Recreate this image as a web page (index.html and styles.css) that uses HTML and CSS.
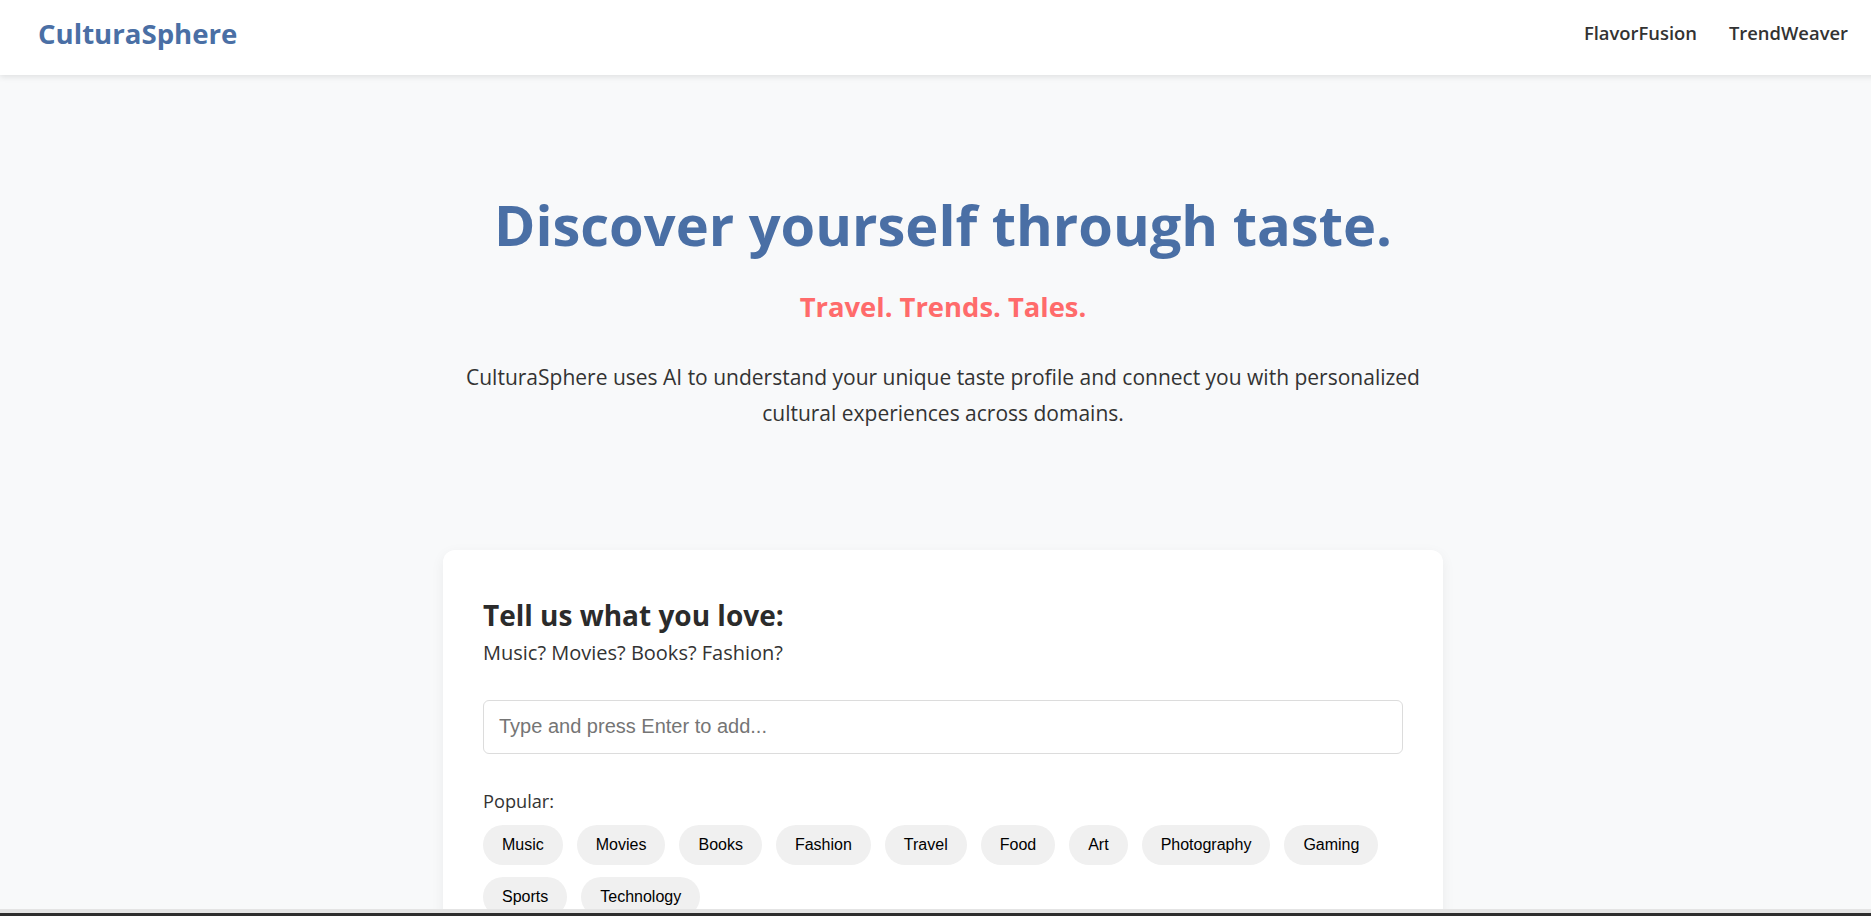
FILE: index.html
```html
<!DOCTYPE html>
<html lang="en">
<head>
<meta charset="utf-8">
<title>CulturaSphere</title>
<link rel="stylesheet" href="styles.css">
</head>
<body>
<div class="page">
  <header class="topbar">
    <div class="logo">CulturaSphere</div>
    <nav class="nav">
      <a class="nav-link" href="#">FlavorFusion</a>
      <a class="nav-link" href="#">TrendWeaver</a>
    </nav>
  </header>

  <section class="hero">
    <h1 class="hero-title">Discover yourself through taste.</h1>
    <h2 class="hero-sub">Travel. Trends. Tales.</h2>
    <p class="hero-text">CulturaSphere uses AI to understand your unique taste profile and connect you with personalized cultural experiences across domains.</p>
  </section>

  <section class="card">
    <h2 class="card-title">Tell us what you love:</h2>
    <p class="card-sub">Music? Movies? Books? Fashion?</p>
    <input class="taste-input" type="text" placeholder="Type and press Enter to add...">
    <p class="popular-label">Popular:</p>
    <div class="chips">
      <button class="chip">Music</button>
      <button class="chip">Movies</button>
      <button class="chip">Books</button>
      <button class="chip">Fashion</button>
      <button class="chip">Travel</button>
      <button class="chip">Food</button>
      <button class="chip">Art</button>
      <button class="chip">Photography</button>
      <button class="chip">Gaming</button>
      <button class="chip">Sports</button>
      <button class="chip">Technology</button>
    </div>
  </section>
</div>
<div class="window-edge"></div>
</body>
</html>
```

FILE: styles.css
```css
html {
  overflow-x: hidden;
}

body {
  margin: 0;
  background: #f8f9fa;
  font-family: "Open Sans", "Noto Sans", sans-serif;
  color: #333;
}

.page {
  width: 1886px;
  padding-bottom: 200px;
}

.topbar {
  height: 75px;
  box-sizing: border-box;
  background: #fff;
  display: flex;
  align-items: center;
  justify-content: space-between;
  padding: 0 38px 10px;
  box-shadow: 0 2px 6px rgba(0, 0, 0, 0.1);
  position: relative;
}

.logo {
  font-size: 27.6px;
  font-weight: 700;
  color: #4a6fa5;
}

.nav {
  display: flex;
  gap: 32px;
}

.nav-link {
  font-size: 18.4px;
  font-weight: 600;
  color: #333;
  text-decoration: none;
}

.hero {
  text-align: center;
  padding: 116px 20px 0;
}

.hero-title {
  margin: 0;
  font-size: 56px;
  font-weight: 700;
  color: #4a6fa5;
  line-height: 1.2;
}

.hero-sub {
  margin: 30px 0 0;
  font-size: 27.4px;
  font-weight: 700;
  color: #ff6b6b;
}

.hero-text {
  margin: 35px auto 0;
  max-width: 980px;
  font-size: 21px;
  line-height: 1.7;
  color: #333;
}

.card {
  width: 1000px;
  box-sizing: border-box;
  margin: 118px auto 0;
  background: #fff;
  border-radius: 12px;
  padding: 40px;
  box-shadow: 0 4px 14px rgba(0, 0, 0, 0.06);
}

.card-title {
  margin: 6px 0 0;
  font-size: 28px;
  font-weight: 700;
  color: #2b2b2b;
}

.card-sub {
  margin: 5px 0 0;
  font-size: 20px;
  color: #333;
}

.taste-input {
  display: block;
  width: 100%;
  box-sizing: border-box;
  margin-top: 34px;
  height: 54px;
  padding: 0 15px;
  border: 1px solid #dcdcdc;
  border-radius: 6px;
  font-family: "Liberation Sans", Arial, sans-serif;
  font-size: 20px;
  color: #333;
  background: #fff;
}

.taste-input::placeholder {
  color: #757575;
}

.popular-label {
  margin: 35px 0 12px;
  font-size: 18.2px;
  color: #333;
}

.chips {
  display: flex;
  flex-wrap: wrap;
  gap: 12px 14px;
}

.chip {
  border: none;
  background: #f0f0f0;
  border-radius: 20px;
  padding: 11px 19px;
  font-family: "Liberation Sans", Arial, sans-serif;
  font-size: 16px;
  color: #000;
}

.window-edge {
  position: fixed;
  left: 0;
  right: 0;
  bottom: 0;
  height: 3px;
  border-top: 4px solid #e4e4e4;
  background: #2e2e2e;
}
```
